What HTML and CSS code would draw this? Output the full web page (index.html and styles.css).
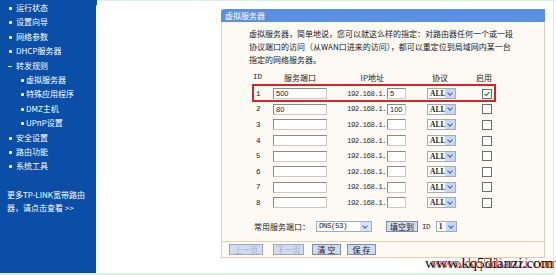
FILE: index.html
```html
<!DOCTYPE html>
<html lang="zh-CN">
<head>
    <meta charset="UTF-8">
    <title>虚拟服务器</title>
    <link rel="stylesheet" href="styles.css">
</head>
<body>

<div class="frame">
    <nav class="side">
        <ul class="menu">
            <li>运行状态</li>
            <li>设置向导</li>
            <li>网络参数</li>
            <li>DHCP服务器</li>
            <li class="open">转发规则</li>
            <li class="sub">虚拟服务器</li>
            <li class="sub">特殊应用程序</li>
            <li class="sub">DMZ主机</li>
            <li class="sub">UPnP设置</li>
            <li>安全设置</li>
            <li>路由功能</li>
            <li>系统工具</li>
        </ul>
        <p class="more">更多TP-LINK宽带路由<br>器，请点击查看 &gt;&gt;</p>
    </nav>

    <main class="content">
        <section class="panel">
            <h2 class="panel-title">虚拟服务器</h2>
            <div class="panel-body">
                <p class="intro">虚拟服务器，简单地说，您可以就这么样的指定：对路由器任何一个或一段<br>协议端口的访问（从WAN口进来的访问），都可以重定位到局域网内某一台<br>指定的网络服务器。</p>

                <div class="vs-table">
                    <div class="vs-row vs-head">
                        <span class="c-id">ID</span>
                        <span class="c-port">服务端口</span>
                        <span class="c-ip">IP地址</span>
                        <span class="c-proto">协议</span>
                        <span class="c-on">启用</span>
                    </div>
                    <div class="vs-row marked">
                        <span class="c-id">1</span>
                        <span class="c-port"><span class="box port">500</span></span>
                        <span class="c-ip"><span class="ip">192.168.1.</span><span class="box host">5</span></span>
                        <span class="c-proto"><span class="sel">ALL<i class="arrow"></i></span></span>
                        <span class="c-on"><span class="check on"><svg viewBox="0 0 10 10"><path d="M2 5l2 2 4-4.5" fill="none" stroke="#1f9a26" stroke-width="1.5"/></svg></span></span>
                    </div>
                    <div class="vs-row">
                        <span class="c-id">2</span>
                        <span class="c-port"><span class="box port">80</span></span>
                        <span class="c-ip"><span class="ip">192.168.1.</span><span class="box host">100</span></span>
                        <span class="c-proto"><span class="sel">ALL<i class="arrow"></i></span></span>
                        <span class="c-on"><span class="check"></span></span>
                    </div>
                    <div class="vs-row">
                        <span class="c-id">3</span>
                        <span class="c-port"><span class="box port"></span></span>
                        <span class="c-ip"><span class="ip">192.168.1.</span><span class="box host"></span></span>
                        <span class="c-proto"><span class="sel">ALL<i class="arrow"></i></span></span>
                        <span class="c-on"><span class="check"></span></span>
                    </div>
                    <div class="vs-row">
                        <span class="c-id">4</span>
                        <span class="c-port"><span class="box port"></span></span>
                        <span class="c-ip"><span class="ip">192.168.1.</span><span class="box host"></span></span>
                        <span class="c-proto"><span class="sel">ALL<i class="arrow"></i></span></span>
                        <span class="c-on"><span class="check"></span></span>
                    </div>
                    <div class="vs-row">
                        <span class="c-id">5</span>
                        <span class="c-port"><span class="box port"></span></span>
                        <span class="c-ip"><span class="ip">192.168.1.</span><span class="box host"></span></span>
                        <span class="c-proto"><span class="sel">ALL<i class="arrow"></i></span></span>
                        <span class="c-on"><span class="check"></span></span>
                    </div>
                    <div class="vs-row">
                        <span class="c-id">6</span>
                        <span class="c-port"><span class="box port"></span></span>
                        <span class="c-ip"><span class="ip">192.168.1.</span><span class="box host"></span></span>
                        <span class="c-proto"><span class="sel">ALL<i class="arrow"></i></span></span>
                        <span class="c-on"><span class="check"></span></span>
                    </div>
                    <div class="vs-row">
                        <span class="c-id">7</span>
                        <span class="c-port"><span class="box port"></span></span>
                        <span class="c-ip"><span class="ip">192.168.1.</span><span class="box host"></span></span>
                        <span class="c-proto"><span class="sel">ALL<i class="arrow"></i></span></span>
                        <span class="c-on"><span class="check"></span></span>
                    </div>
                    <div class="vs-row">
                        <span class="c-id">8</span>
                        <span class="c-port"><span class="box port"></span></span>
                        <span class="c-ip"><span class="ip">192.168.1.</span><span class="box host"></span></span>
                        <span class="c-proto"><span class="sel">ALL<i class="arrow"></i></span></span>
                        <span class="c-on"><span class="check"></span></span>
                    </div>
                </div>

                <div class="common">
                    <span class="label">常用服务端口：</span>
                    <span class="sel wide">DNS(53)<i class="arrow"></i></span>
                    <span class="btn fill">填空到</span>
                    <span class="ip">ID</span>
                    <span class="sel tiny">1<i class="arrow"></i></span>
                </div>
            </div>
            <div class="panel-foot">
                <span class="btn off b1">上一页</span>
                <span class="btn off b2">下一页</span>
                <span class="btn b3">清 空</span>
                <span class="btn b4">保 存</span>
            </div>
        </section>
        <div class="watermark">www.kq5dianzi.com</div>
    </main>
</div>

</body>
</html>
```

FILE: styles.css
```css
body {
    margin: 0;
    background: #fff;
    font-family: "Noto Sans CJK SC", "Noto Sans", sans-serif;
    font-size: 8px;
    color: #222;
}
.frame {
    width: 553px;
    height: 272px;
    display: flex;
    border-top: 1px solid #dcefe3;
    border-right: 1px solid #dcefe3;
    border-bottom: 2px solid #dcefe3;
    position: relative;
}

/* left menu */
.side {
    width: 97px;
    height: 273px;
    margin-top: -1px;
    background: #0a4ea8;
    color: #fff;
    clip-path: polygon(0 0, 100px 0, 96px 6px, 96px 100%, 0 100%);
}
.menu {
    list-style: none;
    margin: 0;
    padding: 1px 0 0 0;
}
.menu li {
    height: 14.4px;
    line-height: 14.4px;
    padding-left: 16px;
    position: relative;
}
.menu li::before {
    content: "";
    position: absolute;
    left: 9px;
    top: 6px;
    width: 3px;
    height: 3px;
    background: #fff;
    border-radius: 1px;
}
.menu li.open::before {
    left: 8px;
    top: 7px;
    width: 4px;
    height: 1px;
}
.menu li.sub {
    padding-left: 26px;
}
.menu li.sub::before {
    left: 21px;
}
.more {
    margin: 14px 0 0 7px;
    line-height: 13.5px;
}

/* main panel */
.content {
    flex: 1;
    position: relative;
}
.panel {
    width: 322px;
    margin: 8px 0 0 124px;
    background: #fdfaf4;
    border: 1px solid #e2d0b4;
    border-top: none;
}
.panel-title {
    margin: 0 -1px;
    height: 13px;
    line-height: 13px;
    padding-left: 4px;
    background: #5b8fe4;
    color: #fff;
    font-size: 8px;
    font-weight: normal;
    border-radius: 4px 0 0 0;
}
.panel-body {
    padding: 5px 0 8px 27px;
}
.intro {
    margin: 0;
    line-height: 13px;
}

.vs-table {
    margin-top: 3px;
    position: relative;
}
.vs-row {
    display: grid;
    grid-template-columns: 24px 54px 79px 50px 40px;
    height: 15.6px;
    align-items: center;
}
.vs-head {
    height: 16px;
    margin-bottom: 1px;
}
.vs-row.marked::after {
    content: "";
    position: absolute;
    left: 3px;
    top: 15px;
    width: 240px;
    height: 14px;
    border: 2px solid #d3262a;
}
.c-id {
    padding-left: 7px;
    font-family: "Liberation Mono", monospace;
    font-size: 7.5px;
}
.vs-head .c-id {
    padding-left: 4px;
}
.c-port {
    display: flex;
}
.vs-head .c-port {
    display: block;
    text-align: center;
}
.c-ip {
    display: flex;
    justify-content: flex-end;
    align-items: center;
}
.vs-head .c-ip {
    display: block;
    text-align: right;
    padding-right: 22px;
}
.c-proto {
    display: flex;
    justify-content: flex-end;
}
.vs-head .c-proto {
    display: block;
    padding-left: 26px;
}
.c-on {
    padding-left: 26px;
    display: flex;
}
.vs-head .c-on {
    display: block;
    padding-left: 20px;
}

.box {
    height: 11px;
    box-sizing: border-box;
    background: #fff;
    border: 1px solid #8b8b8b;
    border-right-color: #c9c9c9;
    border-bottom-color: #c9c9c9;
    font-family: "Liberation Sans", sans-serif;
    font-size: 7.5px;
    line-height: 9px;
    padding-left: 2px;
}
.port {
    width: 54px;
}
.host {
    width: 19px;
    margin-left: 1px;
}
.ip {
    font-family: "Liberation Mono", monospace;
    font-size: 7.5px;
    letter-spacing: -0.6px;
    color: #333;
}

.sel {
    position: relative;
    width: 29px;
    height: 11px;
    box-sizing: border-box;
    background: #fff;
    border: 1px solid #a5acb5;
    font-family: "Liberation Serif", serif;
    font-size: 7.5px;
    font-weight: bold;
    line-height: 9px;
    padding-left: 2px;
}
.arrow {
    position: absolute;
    right: 0;
    top: 0;
    width: 10px;
    height: 9px;
    background: #c6d6f6;
}
.arrow::after {
    content: "";
    position: absolute;
    left: 3px;
    top: 1.5px;
    width: 3px;
    height: 3px;
    border-right: 1.3px solid #3d62b8;
    border-bottom: 1.3px solid #3d62b8;
    transform: rotate(45deg);
}
.check {
    width: 10px;
    height: 10px;
    box-sizing: border-box;
    border: 1px solid #6e6e6e;
    background: #fff;
}
.check svg {
    display: block;
    width: 8px;
    height: 8px;
}

.common {
    display: flex;
    align-items: center;
    margin: 10px 0 0 5px;
    height: 12px;
}
.common .label {
    width: 62px;
}
.sel.wide {
    width: 56px;
    font-weight: normal;
    font-family: "Liberation Mono", monospace;
    letter-spacing: -0.5px;
}
.sel.wide .arrow {
    width: 11px;
    background: #d7e2f7;
}
.sel.tiny {
    width: 21px;
    margin-left: 6px;
}
.common .fill {
    margin: 0 4px 0 14px;
    width: 32px;
    height: 11px;
}

.btn {
    display: inline-block;
    box-sizing: border-box;
    height: 11px;
    line-height: 9px;
    text-align: center;
    background: #d2daf0;
    border: 1px solid #7d8db2;
    color: #1a1a1a;
}
.btn.off {
    color: #a4b0d4;
    border-color: #9aa8c8;
}
.panel-foot {
    border-top: 1px solid #e2d0b4;
    height: 15px;
    display: flex;
    align-items: center;
    padding-left: 7px;
}
.b1 { width: 34px; margin-right: 10px; }
.b2 { width: 31px; margin-right: 8px; }
.b3 { width: 29px; margin-right: 6px; }
.b4 { width: 29px; }

/* doubled watermark, red copy drawn as a shadow */
.watermark {
    position: absolute;
    left: 328px;
    top: 254px;
    font-family: "Liberation Serif", serif;
    font-size: 15.5px;
    line-height: 16px;
    white-space: nowrap;
    color: #111;
    text-shadow: 6px 0 0 rgba(200, 24, 24, 0.85);
}
```
